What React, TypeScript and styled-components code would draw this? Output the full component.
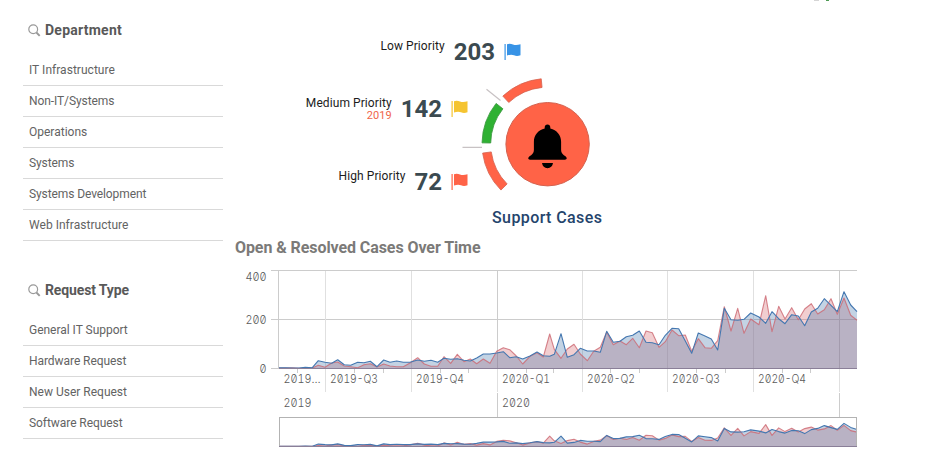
import React from "react";
import styled, { createGlobalStyle } from "styled-components";

const GlobalStyle = createGlobalStyle`
  * { box-sizing: border-box; }
  body { margin: 0; background: #fff; overflow: hidden; }
`;

const Page = styled.div`
  display: grid;
  grid-template-columns: 223px 1fr;
  column-gap: 11px;
  width: 933px;
  height: 471px;
  background: #fff;
  font-family: Roboto, "Liberation Sans", sans-serif;
  color: #595959;
  overflow: hidden;
`;

const Sidebar = styled.aside`
  display: flex;
  flex-direction: column;
  gap: 29px;
  padding: 10px 0 0 23px;
`;

const FilterBox = styled.section`
  display: flex;
  flex-direction: column;
`;

const FilterTitle = styled.h2<{ $spacing: number }>`
  display: flex;
  align-items: center;
  gap: 4px;
  height: 40px;
  margin: 0 0 5px;
  padding-left: 5px;
  font-size: 14px;
  font-weight: 700;
  letter-spacing: ${(p) => p.$spacing}px;
  color: #595959;
`;

const FilterRow = styled.div<{ $spacing: number }>`
  display: flex;
  align-items: center;
  height: 31px;
  padding-left: 6px;
  border-bottom: 1px solid #d9d9d9;
  font-size: 12px;
  letter-spacing: ${(p) => p.$spacing}px;
  color: #636363;
`;

const Main = styled.main`
  display: flex;
  flex-direction: column;
`;

const Edge = styled.div`
  display: flex;
  gap: 7px;
  height: 2px;
  padding-left: 580px;
`;

const EdgeMark = styled.i<{ $w: number; $c: string }>`
  width: ${(p) => p.$w}px;
  height: 1px;
  background: ${(p) => p.$c};
`;

const Summary = styled.section`
  display: flex;
  flex-direction: column;
  height: 234px;
  padding-top: 35px;
`;

const SummaryBody = styled.div`
  display: flex;
  height: 130px;
`;

const PriorityColumn = styled.div`
  display: flex;
  flex-direction: column;
  gap: 41px;
  width: 234px;
  padding-top: 25px;
  flex: none;
`;

const Priority = styled.div<{ $width: number }>`
  display: flex;
  justify-content: flex-end;
  align-items: flex-start;
  width: ${(p) => p.$width}px;
  height: 32px;
`;

const PriorityLabel = styled.div`
  display: flex;
  flex-direction: column;
  align-items: flex-end;
  margin-right: 9px;
  padding-top: 2px;
  font-size: 12px;
  line-height: 14px;
  letter-spacing: 0.08px;
  color: #1c1c1c;
`;

const Year = styled.span`
  font-size: 11px;
  line-height: 11px;
  color: #f0654a;
`;

const Count = styled.strong`
  font-size: 24px;
  line-height: 30px;
  margin-right: 9px;
  color: #3b4a50;
`;

const FlagSvg = styled.svg`
  width: 17px;
  height: 18px;
  margin-top: 6px;
  flex: none;
`;

const Dial = styled.svg`
  width: 130px;
  height: 130px;
  margin-left: -8px;
  flex: none;
`;

const DialTitle = styled.div`
  width: 624px;
  padding-left: 258px;
  margin-top: 9px;
  font-size: 16px;
  line-height: 20px;
  font-weight: 500;
  letter-spacing: 0.4px;
  color: #24446c;
`;

const ChartTitle = styled.h2`
  margin: 0;
  height: 24px;
  padding-left: 1px;
  font-size: 16px;
  line-height: 24px;
  font-weight: 700;
  letter-spacing: -0.08px;
  color: #7b7a78;
`;

const ChartSvg = styled.svg`
  display: block;
  width: 630px;
  height: 190px;
  font-family: Inter, "Liberation Mono", monospace;
  font-feature-settings: "zero", "tnum";
  font-size: 12px;
  font-weight: 300;
  fill: #595959;
`;

const SearchIcon = () => (
  <svg width="13" height="13" viewBox="0 0 13 13" fill="none" stroke="#999">
    <circle cx="5.2" cy="5.3" r="4.4" strokeWidth="1.2" />
    <path d="M8.4 8.5 L11.7 11.8" strokeWidth="1.9" />
  </svg>
);

const Flag = ({ color }: { color: string }) => (
  <FlagSvg viewBox="0 0 17 18">
    <path d="M0.5 1h1.2v16h-1.2z" fill={color} />
    <path d="M3 1.2Q6 .4 9 1.5T16.5 1.3V12.2Q13 13.6 10 12.3T3 12.6Z" fill={color} />
  </FlagSvg>
);

const PriorityItem = (p: { label: string; count: number; color: string; width: number; year?: string }) => (
  <Priority $width={p.width}>
    <PriorityLabel>
      <span>{p.label}</span>
      {p.year && <Year>{p.year}</Year>}
    </PriorityLabel>
    <Count>{p.count}</Count>
    <Flag color={p.color} />
  </Priority>
);

const Filter = ({ title, spacing, rows }: { title: string; spacing: number; rows: [string, number][] }) => (
  <FilterBox>
    <FilterTitle $spacing={spacing}>
      <SearchIcon />
      {title}
    </FilterTitle>
    {rows.map(([name, rowSpacing]) => (
      <FilterRow key={name} $spacing={rowSpacing}>{name}</FilterRow>
    ))}
  </FilterBox>
);

// Ring segment around the dial; angles are degrees clockwise from the top.
function ring(from: number, to: number) {
  const at = (deg: number, r: number) => {
    const a = (deg * Math.PI) / 180;
    return `${(547.5 + r * Math.sin(a)).toFixed(2)} ${(144 - r * Math.cos(a)).toFixed(2)}`;
  };
  return `M${at(from, 65.5)}A65.5 65.5 0 0 1 ${at(to, 65.5)}L${at(to, 56.8)}A56.8 56.8 0 0 0 ${at(from, 56.8)}Z`;
}

// Weekly samples as [position, resolved, open], in thirds of a plot unit, per stretch.
const stretches: { x: number; base: number; points: number[][] }[] = [
  {
    x: -162, base: 400.5,
    points: [
      [162, 398, 399], [182, 398, 399], [202, 399, 398], [222, 399, 400], [241, 397, 399], [262, 398, 399],
      [280, 377, 391], [300, 382, 397], [320, 385, 384], [338, 374, 381], [358, 389, 393], [377, 391, 395],
      [398, 382, 398], [417, 383, 389], [436, 379, 386], [456, 395, 396], [476, 375, 387], [495, 382, 393],
      [515, 378, 395], [535, 382, 395], [555, 382, 384], [578, 375, 368], [598, 379, 387], [618, 376, 394],
      [638, 382, 394], [657, 370, 365], [677, 373, 385], [697, 371, 358], [717, 376, 380], [736, 378, 372],
      [755, 369, 386], [775, 357, 372], [795, 357, 385],
    ],
  },
  {
    x: 513, base: 175.5,
    points: [
      [140, 129, 124], [160, 125, 113], [179, 143, 119], [199, 140, 138], [218, 147, 162], [240, 138, 139],
      [261, 126, 128], [280, 137, 141], [299, 139, 72], [313, 133, 118], [333, 71, 145], [352, 142, 117],
      [372, 134, 103], [391, 115, 132], [412, 123, 152], [431, 123, 124], [451, 127, 112],
    ],
  },
  {
    x: 933, base: 235.5,
    points: [
      [50, 124, 126], [70, 157, 164], [90, 154, 153], [109, 140, 164], [128, 136, 145], [148, 123, 173],
      [168, 157, 123], [187, 158, 128], [207, 164, 172], [226, 136, 155], [246, 115, 120], [266, 116, 137],
      [286, 153, 135], [305, 190, 184], [325, 129, 146], [345, 138, 173], [364, 147, 175], [383, 180, 152],
    ],
  },
  {
    x: 1293, base: 295.5,
    points: [
      [43, 115, 110], [63, 149, 183], [83, 151, 115], [102, 148, 190], [122, 129, 147], [147, 141, 164],
      [167, 160, 77], [186, 125, 185], [206, 146, 109], [225, 161, 147], [245, 134, 113], [265, 138, 149],
      [284, 167, 117], [304, 126, 101], [323, 115, 132], [343, 86, 119], [363, 106, 86], [382, 125, 133],
      [402, 65, 84], [422, 105, 136], [441, 125, 151],
    ],
  },
];

const samples = stretches.flatMap((s) =>
  s.points.map(([x, b, r]) => ({ x: (x + s.x) / 3, resolved: (s.base - b) / 3, open: (s.base - r) / 3 }))
);

const Areas = ({ base, scale }: { base: number; scale: number }) => {
  const line = (k: "resolved" | "open") =>
    samples.map((s, i) => `${i ? "L" : "M"}${(279 + s.x).toFixed(1)} ${(base - s[k] * scale).toFixed(1)}`).join("");
  const close = `V${base}H279Z`;
  return (
    <g strokeWidth="1.1" strokeLinejoin="round">
      <path d={line("open") + close} fill="#d9767c" fillOpacity=".36" />
      <path d={line("resolved") + close} fill="#4477aa" fillOpacity=".32" />
      <path d={line("open")} fill="none" stroke="#cc6670" strokeOpacity=".8" />
      <path d={line("resolved")} fill="none" stroke="#4477b0" />
    </g>
  );
};

const quarters: [number, string, number][] = [
  [283.5, "2019…", 37], [330, "2019-Q3", 48], [416, "2019-Q4", 48], [502, "2020-Q1", 48],
  [587, "2020-Q2", 48], [672, "2020-Q3", 48], [758, "2020-Q4", 48],
];
const months = [297.5, 354.5, 383.5, 440.5, 468.5, 526.5, 553.5, 610.5, 639.5, 696.5, 725.5, 782.5, 810.5];

const Label = ({ x, y, w, children }: { x: number; y: number; w: number; children: string }) => (
  <text x={x} y={y} textLength={w} lengthAdjust="spacingAndGlyphs">{children}</text>
);

const CasesChart = () => (
  <ChartSvg viewBox="234 260 630 190">
    <g stroke="#ccc">
      <path d="M271 270.5H857M271 319.5H857M271 368.5H857M278.5 270V369" />
      <path d="M497.5 270V369M839.5 270V369M497.5 393V417M839.5 393V417" />
      <path d={months.map((x) => `M${x} 369v4`).join("")} />
    </g>
    <path d="M325.5 271V392M411.5 271V392M582.5 271V392M667.5 271V392M753.5 271V392M497.5 369V392M839.5 369V392" stroke="#e0e0e0" />
    <Areas base={368.5} scale={1} />
    <path d="M279 368.5H857" stroke="#8a7f98" />
    <Label x={245.5} y={281} w={21}>400</Label>
    <Label x={245.5} y={324} w={21}>200</Label>
    <Label x={259.5} y={373} w={7}>0</Label>
    {quarters.map(([x, t, w]) => <Label key={t} x={x} y={383} w={w}>{t}</Label>)}
    <Label x={283.5} y={407} w={28}>2019</Label>
    <Label x={502} y={407} w={28}>2020</Label>
    <Areas base={446.5} scale={0.3} />
    <rect x="279.5" y="417.5" width="577" height="29" fill="none" stroke="#b3b3b3" />
    <path d="M279 446.5H857" stroke="#8a7f98" />
  </ChartSvg>
);

export default function App() {
  return (
    <Page>
      <GlobalStyle />
      <Sidebar>
        <Filter
          title="Department"
          spacing={0.25}
          rows={[
            ["IT Infrastructure", 0.03], ["Non-IT/Systems", -0.09], ["Operations", 0],
            ["Systems", -0.1], ["Systems Development", -0.1], ["Web Infrastructure", 0.03],
          ]}
        />
        <Filter
          title="Request Type"
          spacing={-0.13}
          rows={[
            ["General IT Support", -0.02], ["Hardware Request", -0.06],
            ["New User Request", 0], ["Software Request", -0.06],
          ]}
        />
      </Sidebar>
      <Main>
        <Edge>
          <EdgeMark $w={5} $c="#d5d5d5" />
          <EdgeMark $w={3} $c="#4f9a55" />
        </Edge>
        <Summary>
          <PriorityItem label="Low Priority" count={203} color="#3793e6" width={287} />
          <SummaryBody>
            <PriorityColumn>
              <PriorityItem label="Medium Priority" count={142} color="#f5c431" width={234} year="2019" />
              <PriorityItem label="High Priority" count={72} color="#ff6347" width={234} />
            </PriorityColumn>
            <Dial viewBox="460 69 130 130">
              <g stroke="#c8c2c4" strokeWidth="1.2">
                <path d="M486.5 89.3L500.5 100.5M462.5 147.3H482" />
              </g>
              <path d={ring(-43, -5.5)} fill="#ff6347" stroke="#d4624f" strokeWidth=".8" />
              <path d={ring(-89, -51.7)} fill="#2fb133" stroke="#37953b" strokeWidth=".8" />
              <path d={ring(-134.7, -98)} fill="#ff6347" stroke="#d4624f" strokeWidth=".8" />
              <circle cx="547.6" cy="144.2" r="41.7" fill="#ff6347" stroke="#d4624f" />
              <path
                d="M547.5 124.5c1.7 0 2.8 1.2 2.8 2.7v1.3c6.4 1.4 10.8 6.6 10.8 13.2v8.3c0 3 1.6 4.4 4.3 6.3 2 1.6 1.6 3.4-.4 3.4h-35c-2 0-2.4-1.8-.4-3.4 2.7-1.9 4.3-3.3 4.3-6.3v-8.3c0-6.6 4.4-11.8 10.8-13.2v-1.3c0-1.5 1.1-2.7 2.8-2.7zM542 163h11c-.5 3.3-2.5 5.2-5.5 5.2s-5-1.9-5.5-5.2z"
                fill="#000"
              />
            </Dial>
          </SummaryBody>
          <DialTitle>Support Cases</DialTitle>
        </Summary>
        <ChartTitle>Open &amp; Resolved Cases Over Time</ChartTitle>
        <CasesChart />
      </Main>
    </Page>
  );
}
